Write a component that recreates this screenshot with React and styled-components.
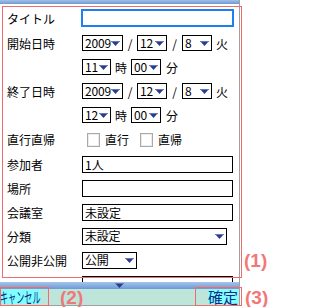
import React from 'react'
import styled, { createGlobalStyle } from 'styled-components'

const GlobalStyle = createGlobalStyle`
  html, body { margin: 0; padding: 0; background: #fff; }
  body { font-family: "Noto Sans CJK JP", "Liberation Sans", sans-serif; }
  * { box-sizing: border-box; }
`

const Page = styled.div`
  position: relative;
  width: 270px;
  height: 307px;
  overflow: hidden;
  background: #fff;
`

const Screen = styled.div`
  width: 240px;
  height: 306px;
  border-right: 1px solid #a0a0a0;
  border-bottom: 1px solid #a0a0a0;
  display: flex;
  flex-direction: column;
`

const TopBar = styled.div`
  flex: none;
  height: 4px;
  background: linear-gradient(#a3c0e6, #6e99d2);
`

const Form = styled.div`
  flex: none;
  height: 278px;
  padding-top: 1px;
  overflow: hidden;
`

const Row = styled.div`
  display: flex;
  align-items: center;
  height: ${p => p.h || 24}px;
  font-size: 12px;
  color: #000;
`

const Label = styled.div`
  width: 82px;
  padding-left: 7px;
  flex: none;
  white-space: nowrap;
`

const TextBox = styled.div`
  width: ${p => p.w || 151}px;
  height: ${p => (p.focus ? 18 : 17)}px;
  margin-left: ${p => (p.focus ? -1 : 0)}px;
  border: ${p => (p.focus ? '2px solid #1d80f2' : '1px solid #000')};
  background: #fff;
  padding-left: 2px;
  line-height: 15px;
  white-space: nowrap;
`

const SelectBox = styled.div`
  width: ${p => p.w}px;
  height: ${p => p.h || 16}px;
  border: 1px solid #000;
  background: #fff;
  display: flex;
  align-items: center;
  justify-content: space-between;
  padding: 0 ${p => p.pr || 2}px 0 2px;
  font-family: "Liberation Sans Narrow", "Noto Sans CJK JP", sans-serif;
  letter-spacing: -0.2px;
`

const SelText = styled.span`
  font-family: "Noto Sans CJK JP", sans-serif;
  line-height: 14px;
`

const Sep = styled.span`
  width: ${p => p.w}px;
  text-align: center;
  flex: none;
`

const Unit = styled.span`
  margin-left: ${p => p.ml || 0}px;
  margin-right: ${p => p.mr || 0}px;
  flex: none;
`

const Check = styled.span`
  width: 13px;
  height: 14px;
  margin-left: ${p => p.ml}px;
  margin-right: 5px;
  border: 1px solid #a9a9a9;
  box-shadow: inset 0 0 0 1px #ececec;
  background: #fff;
  flex: none;
`

const BottomStrip = styled.div`
  flex: none;
  height: 7px;
  background: linear-gradient(#a7c4ea, #6a9ad6);
  display: flex;
  justify-content: center;
  align-items: flex-start;
  padding-top: 1px;
`

const ActionBar = styled.div`
  flex: none;
  height: 16px;
  background: #bde5da;
  display: flex;
  align-items: center;
  justify-content: space-between;
  padding-right: 1px;
`

const SoftKey = styled.span`
  display: inline-block;
  height: 14px;
  line-height: 14px;
  font-size: 15px;
  color: #0d2a86;
  background: #80ffff;
  white-space: nowrap;
  transform-origin: left center;
  transform: scaleX(${p => p.sx || 1});
`

const Mark = styled.div`
  position: absolute;
  left: ${p => p.x}px;
  top: ${p => p.y}px;
  width: ${p => p.w}px;
  height: ${p => p.h}px;
  border: 1px solid #f06c6c;
  pointer-events: none;
`

const MarkLabel = styled.div`
  position: absolute;
  left: ${p => p.x}px;
  top: ${p => p.y}px;
  font-family: "Liberation Sans", sans-serif;
  font-weight: bold;
  font-size: 19px;
  line-height: 20px;
  color: #f07878;
`

const Arrow = ({ w = 9, h = 5 }) => (
  <svg width={w} height={h} viewBox="0 0 9 5" style={{ flex: 'none' }}>
    <polygon points="0,0 9,0 4.5,5" fill="#2a3b8e" />
    <line x1="0" y1="0.5" x2="9" y2="0.5" stroke="#6b78b0" strokeWidth="1" />
  </svg>
)

const Select = ({ w, h, pr, children }) => (
  <SelectBox w={w} h={h} pr={pr}>
    <SelText>{children}</SelText>
    <Arrow />
  </SelectBox>
)

function DateRow({ label, day }) {
  return (
    <Row>
      <Label>{label}</Label>
      <Select w={41} pr={3}>2009</Select>
      <Sep w={14}>/</Sep>
      <Select w={30} pr={2}>12</Select>
      <Sep w={15}>/</Sep>
      <Select w={30} pr={2}>8</Select>
      <Unit ml={4}>{day}</Unit>
    </Row>
  )
}

function TimeRow({ hour }) {
  return (
    <Row>
      <Label />
      <Select w={29} pr={2}>{hour}</Select>
      <Unit ml={4} mr={4}>時</Unit>
      <Select w={30} pr={2}>00</Select>
      <Unit ml={5}>分</Unit>
    </Row>
  )
}

export default function App() {
  return (
    <Page>
      <GlobalStyle />
      <Screen>
        <TopBar />
        <Form>
          <Row h={26}>
            <Label>タイトル</Label>
            <TextBox focus w={153} />
          </Row>
          <DateRow label="開始日時" day="火" />
          <TimeRow hour="11" />
          <DateRow label="終了日時" day="火" />
          <TimeRow hour="12" />
          <Row h={25}>
            <Label>直行直帰</Label>
            <Check ml={5} />
            <span>直行</span>
            <Check ml={11} />
            <span>直帰</span>
          </Row>
          <Row>
            <Label>参加者</Label>
            <TextBox>1人</TextBox>
          </Row>
          <Row>
            <Label>場所</Label>
            <TextBox />
          </Row>
          <Row>
            <Label>会議室</Label>
            <TextBox>未設定</TextBox>
          </Row>
          <Row>
            <Label>分類</Label>
            <Select w={145} h={17} pr={2}>未設定</Select>
          </Row>
          <Row>
            <Label>公開非公開</Label>
            <Select w={55} h={17} pr={2}>公開</Select>
          </Row>
          <Row>
            <Label />
            <TextBox />
          </Row>
        </Form>
        <BottomStrip>
          <Arrow />
        </BottomStrip>
        <ActionBar>
          <SoftKey sx={0.54}>キャンセル</SoftKey>
          <SoftKey>確定</SoftKey>
        </ActionBar>
      </Screen>

      <Mark x={2} y={6} w={240} h={272} />
      <Mark x={0} y={287} w={49} h={19} />
      <Mark x={195} y={287} w={47} h={19} />
      <MarkLabel x={244} y={251}>(1)</MarkLabel>
      <MarkLabel x={60} y={288}>(2)</MarkLabel>
      <MarkLabel x={245} y={288}>(3)</MarkLabel>
    </Page>
  )
}
